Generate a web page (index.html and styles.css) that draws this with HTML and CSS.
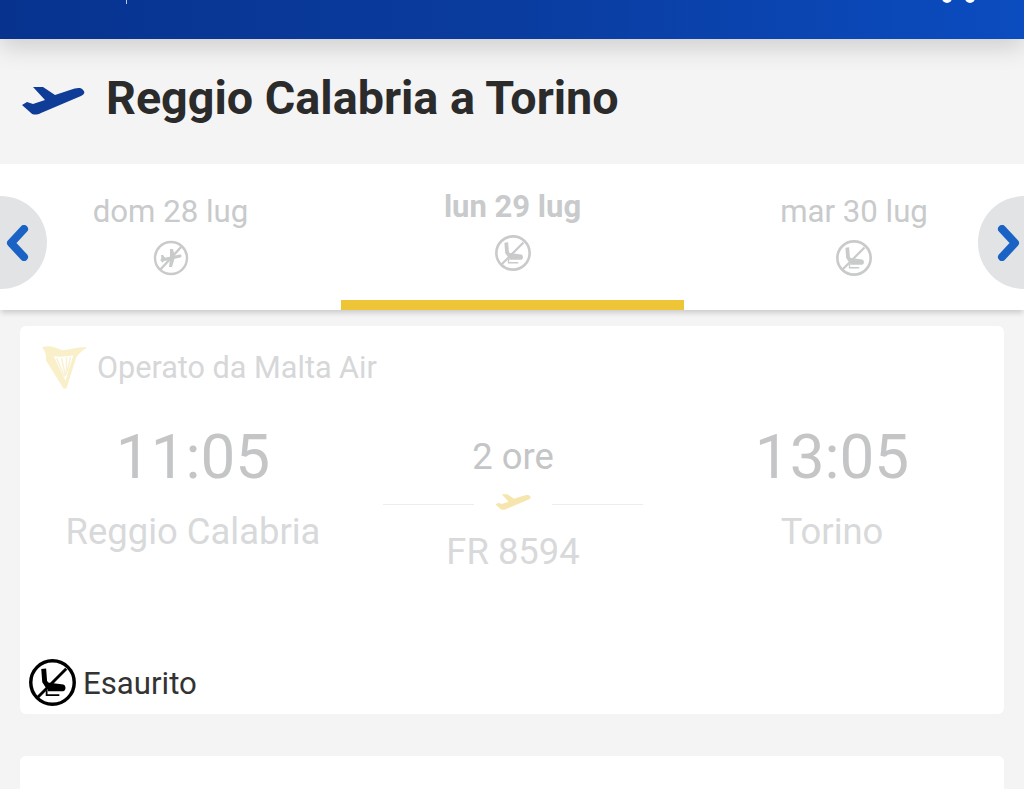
FILE: index.html
```html
<!DOCTYPE html>
<html lang="it">
<head>
  <meta charset="UTF-8" />
  <meta name="viewport" content="width=device-width, initial-scale=1.0"/>
  <title>Reggio Calabria a Torino</title>
  <link rel="stylesheet" href="styles.css">
</head>
<body>

<svg class="defs" width="0" height="0">
  <symbol id="plane" viewBox="0 0 64 29">
    <path d="M62 3C60 0 55 1 49 3L34 8 22 0 12 0 24 13 12 17 6 15 1 18 10 26C12 28 16 28 20 26L60 9C64 7 64 5 62 3Z"/>
  </symbol>
  <symbol id="no-seat" viewBox="0 0 48 48">
    <circle cx="24" cy="24" r="22.200" fill="none" stroke="currentColor" stroke-width="3.500"/>
    <path d="M15 10L16 23 20 29" fill="none" stroke="currentColor" stroke-width="5"/>
    <path d="M19 24L35 26C38 27 38 32 35 33H19Z" fill="currentColor"/>
    <path d="M18 32V37H31" fill="none" stroke="currentColor" stroke-width="1.800"/>
    <path d="M9 39L38 10" fill="none" stroke="currentColor" stroke-width="3"/>
  </symbol>
  <symbol id="no-plane" viewBox="0 0 36 36">
    <circle cx="18" cy="18" r="16" fill="none" stroke="currentColor" stroke-width="2.400"/>
    <path d="M9 20L27 16" fill="none" stroke="currentColor" stroke-width="3" stroke-linecap="round"/>
    <path d="M17 9L20 9 22 17 19 27 16 27 17 19Z" fill="currentColor"/>
    <path d="M8 15L10 15 13 19 9 23Z" fill="currentColor"/>
    <path d="M7 30L29 6" fill="none" stroke="currentColor" stroke-width="2.400"/>
  </symbol>
</svg>

<header class="topbar">
  <span class="tick"></span>
  <span class="dots"><i></i><i></i></span>
</header>

<section class="route">
  <svg class="route-plane"><use href="#plane"/></svg>
  <h1>Reggio Calabria a Torino</h1>
</section>

<nav class="dates">
  <button class="arrow arrow-left">
    <svg viewBox="0 0 24 36" width="24" height="36"><path d="M19 4L6 18 19 32"/></svg>
  </button>
  <div class="day">
    <span>dom 28 lug</span>
    <svg class="day-icon"><use href="#no-plane"/></svg>
  </div>
  <div class="day active">
    <span>lun 29 lug</span>
    <svg class="day-icon"><use href="#no-seat"/></svg>
  </div>
  <div class="day">
    <span>mar 30 lug</span>
    <svg class="day-icon"><use href="#no-seat"/></svg>
  </div>
  <button class="arrow arrow-right">
    <svg viewBox="0 0 24 36" width="24" height="36"><path d="M5 4L18 18 5 32"/></svg>
  </button>
</nav>

<main class="flights">
  <article class="card">
    <div class="operator">
      <svg class="harp" viewBox="0 0 48 46">
        <path d="M1 3C10 0 16 4 22 6 30 5 40 2 47 3 42 6 39 9 36 13L26 45 23 45 5 16C6 11 4 6 1 3Z" fill="#f9efc8"/>
        <path d="M13 12C20 13 28 12 33 11L25 37Z" fill="#fff"/>
        <path d="M16 14L24 33M21 14L25 32M26 13L26 31M30 13L27 28" fill="none" stroke="#f9f1d2" stroke-width="1.500"/>
      </svg>
      <span>Operato da Malta Air</span>
    </div>
    <div class="times">
      <div class="stop">
        <strong>11:05</strong>
        <span>Reggio Calabria</span>
      </div>
      <div class="middle">
        <span class="duration">2 ore</span>
        <div class="line">
          <svg class="line-plane"><use href="#plane"/></svg>
        </div>
        <span class="number">FR 8594</span>
      </div>
      <div class="stop">
        <strong>13:05</strong>
        <span>Torino</span>
      </div>
    </div>
    <div class="status">
      <svg class="status-icon"><use href="#no-seat"/></svg>
      <span>Esaurito</span>
    </div>
  </article>
  <article class="card card-next"></article>
</main>

</body>
</html>
```

FILE: styles.css
```css
body {
  font-family: Roboto, "Liberation Sans", sans-serif;
  margin: 0;
  padding: 0;
  height: 789px;
  overflow: hidden;
  background: #f4f4f4;
}
.defs {
  display: block;
  height: 0;
}
.topbar {
  display: flex;
  align-items: flex-start;
  height: 39px;
  overflow: hidden;
  background: linear-gradient(90deg, #07338f, #0a3c9f 50%, #0b4cc0);
  box-shadow: 0 8px 24px rgba(0, 0, 0, .16);
  position: relative;
}
.tick {
  width: 1px;
  height: 4px;
  margin-left: 126px;
  background: #b9c8ea;
}
.dots {
  display: flex;
  gap: 13px;
  margin-left: auto;
  margin-right: 49px;
  margin-top: -7px;
}
.dots i {
  width: 10px;
  height: 10px;
  border-radius: 50%;
  background: #fff;
}

.route {
  display: flex;
  align-items: center;
  height: 125px;
  padding-left: 21px;
}
.route-plane {
  width: 64px;
  height: 29px;
  fill: #0f3c97;
}
.route h1 {
  margin: 0 0 8px 21px;
  font-size: 46.700px;
  font-weight: 700;
  color: #2b2b2b;
}

.dates {
  position: relative;
  display: grid;
  grid-template-columns: 341px 343px 340px;
  height: 146px;
  background: #fff;
  box-shadow: 0 4px 5px -1px rgba(0, 0, 0, .16);
}
.day {
  display: flex;
  flex-direction: column;
  align-items: center;
  padding-top: 30px;
  font-size: 31.200px;
  line-height: 36px;
  color: #c8cacc;
  box-sizing: border-box;
}
.day-icon {
  width: 36px;
  height: 36px;
  margin-top: 10px;
}
.day.active {
  padding-top: 25px;
  font-size: 31px;
  font-weight: 700;
  border-bottom: 10px solid #eec537;
}
.arrow {
  position: absolute;
  top: 32px;
  width: 47px;
  height: 93px;
  padding: 0;
  border: 0;
  background: #e1e3e5;
  display: flex;
  align-items: center;
}
.arrow-left {
  left: 0;
  padding-left: 5px;
  border-radius: 0 47px 47px 0;
  justify-content: flex-start;
}
.arrow-right {
  right: 0;
  width: 46px;
  padding-right: 3px;
  border-radius: 46px 0 0 46px;
  justify-content: flex-end;
}
.arrow path {
  fill: none;
  stroke: #1a63c4;
  stroke-width: 8;
  stroke-linecap: round;
  stroke-linejoin: round;
}

.flights {
  display: flex;
  flex-direction: column;
  gap: 42px;
  padding: 16px 20px 0;
}
.card {
  display: flex;
  flex-direction: column;
  flex: none;
  box-sizing: border-box;
  height: 388px;
  padding: 18px 11px 8px 9px;
  background: #fff;
  border-radius: 6px;
}
.card-next {
  height: 60px;
  padding: 0;
}
.operator {
  display: flex;
  align-items: center;
  gap: 9px;
  padding-left: 12px;
  font-size: 30.600px;
  color: #d6d7d8;
}
.harp {
  width: 47px;
  height: 46px;
}
.times {
  display: grid;
  grid-template-columns: 320px 320px 318px;
  margin-top: 32px;
  margin-left: 4px;
  text-align: center;
}
.stop strong {
  display: block;
  font-size: 62px;
  line-height: 70px;
  font-weight: 400;
  color: #c4c5c6;
}
.stop span {
  display: block;
  margin-top: 18px;
  font-size: 36.400px;
  line-height: 44px;
  color: #d8d9da;
}
.middle {
  display: flex;
  flex-direction: column;
  align-items: center;
  padding-top: 13px;
  font-size: 36.400px;
  line-height: 44px;
}
.duration {
  color: #c4c5c6;
}
.line {
  display: flex;
  justify-content: center;
  width: 260px;
  height: 26px;
  margin-top: 12px;
  background: linear-gradient(#eceded, #eceded) left 13px / 91px 1px no-repeat,
    linear-gradient(#eceded, #eceded) right 13px / 91px 1px no-repeat;
}
.line-plane {
  width: 36px;
  height: 17px;
  fill: #f6e6ae;
  margin-top: 3px;
}
.number {
  margin-top: 13px;
  color: #d8d9da;
}
.status {
  display: flex;
  align-items: center;
  gap: 7px;
  margin-top: auto;
  font-size: 31.200px;
  color: #333;
}
.status span {
  margin-top: 2px;
}
.status-icon {
  width: 47px;
  height: 47px;
  color: #000;
}
```
